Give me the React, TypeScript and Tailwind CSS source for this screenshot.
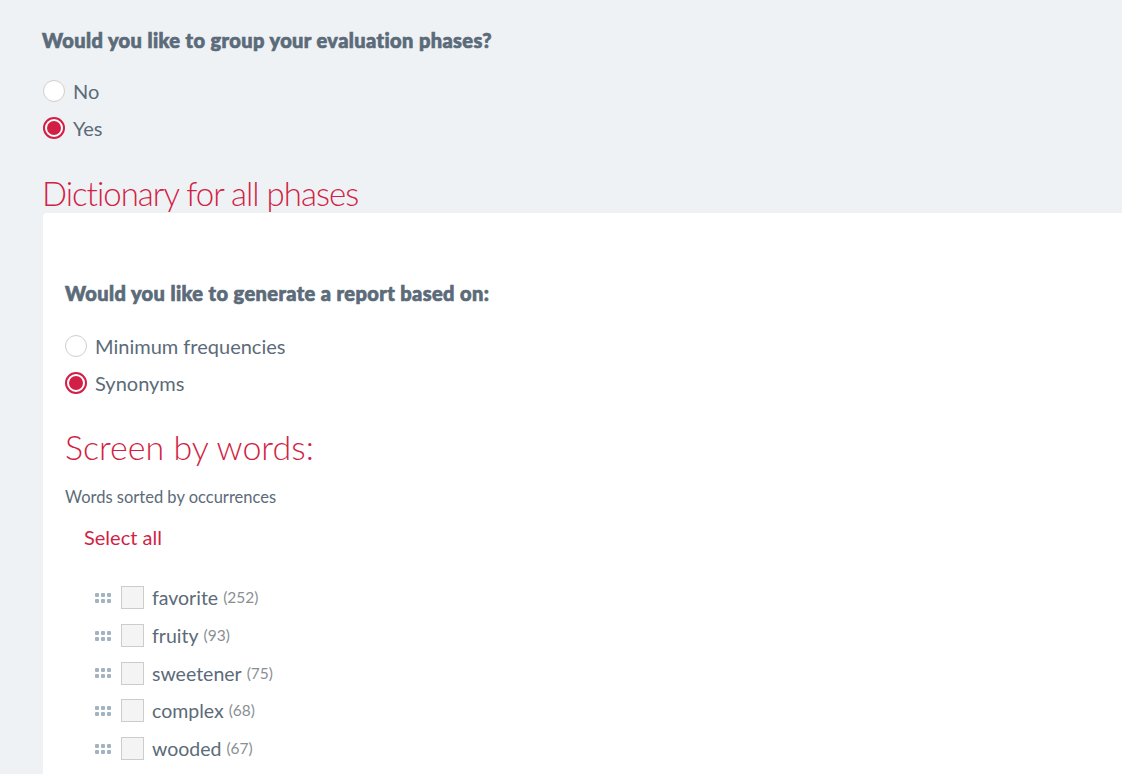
const words: { word: string; count: number }[] = [
  { word: "favorite", count: 252 },
  { word: "fruity", count: 93 },
  { word: "sweetener", count: 75 },
  { word: "complex", count: 68 },
  { word: "wooded", count: 67 },
]

function Radio({ label, checked }: { label: string; checked?: boolean }) {
  return (
    <div className="flex items-center h-[37px]">
      {checked ? (
        <div className="w-[22px] h-[22px] rounded-full border-2 border-[#d21f45] bg-white flex items-center justify-center">
          <div className="w-[14px] h-[14px] rounded-full bg-[#d21f45]" />
        </div>
      ) : (
        <div className="w-[22px] h-[22px] rounded-full border border-[#cfcfcf] bg-white" />
      )}
      <span className="ml-[8px] text-[20px] leading-[24px] text-[#5b6b79]">{label}</span>
    </div>
  )
}

function Handle() {
  return (
    <div className="grid grid-cols-3 gap-[2px] w-[16px]">
      {[0, 1, 2, 3, 4, 5].map(i => (
        <div key={i} className="w-[4px] h-[4px] rounded-[1px] bg-[#a3b3c1]" />
      ))}
    </div>
  )
}

export default function App() {
  return (
    <div className="min-h-[774px] bg-[#eff2f5] font-['Lato','Liberation_Sans',sans-serif] overflow-hidden">
      <div className="pl-[42px] pt-[28px]">
        <h3 className="text-[20px] font-black tracking-[0.4px] text-[#5b6b79] leading-[24px] [-webkit-text-stroke:0.7px_#5b6b79]">
          Would you like to group your evaluation phases?
        </h3>
        <div className="mt-[20px] flex flex-col pl-[1px]">
          <Radio label="No" />
          <Radio label="Yes" checked />
        </div>
        <h2 className="mt-[27px] text-[33px] font-light text-[#d21f45] leading-[40px] tracking-[-1px]">
          Dictionary for all phases
        </h2>
      </div>
      <div className="ml-[43px] bg-white rounded-tl-[4px] pl-[22px] pt-[68px] pb-[20px]">
        <h3 className="text-[20px] font-black tracking-[0.4px] text-[#5b6b79] leading-[24px] [-webkit-text-stroke:0.7px_#5b6b79]">
          Would you like to generate a report based on:
        </h3>
        <div className="mt-[22px] flex flex-col">
          <Radio label="Minimum frequencies" />
          <Radio label="Synonyms" checked />
        </div>
        <h2 className="mt-[24px] text-[34px] font-light text-[#d21f45] leading-[44px]">
          Screen by words:
        </h2>
        <p className="mt-[18px] text-[16.5px] text-[#5b6b79] leading-[20px]">Words sorted by occurrences</p>
        <button className="mt-[18px] ml-[19px] text-[20px] text-[#d21f45] leading-[24px]">Select all</button>
        <div className="mt-[28px] ml-[30px] flex flex-col">
          {words.map(w => (
            <div key={w.word} className="flex items-center h-[37.7px]">
              <Handle />
              <div className="ml-[10px] w-[23px] h-[23px] border border-[#cccccc] bg-[#f4f4f4]" />
              <span className="ml-[8px] text-[19.5px] text-[#5b6b79]">{w.word}</span>
              <span className="ml-[5px] text-[15.5px] text-[#8a8f94]">({w.count})</span>
            </div>
          ))}
        </div>
      </div>
    </div>
  )
}
